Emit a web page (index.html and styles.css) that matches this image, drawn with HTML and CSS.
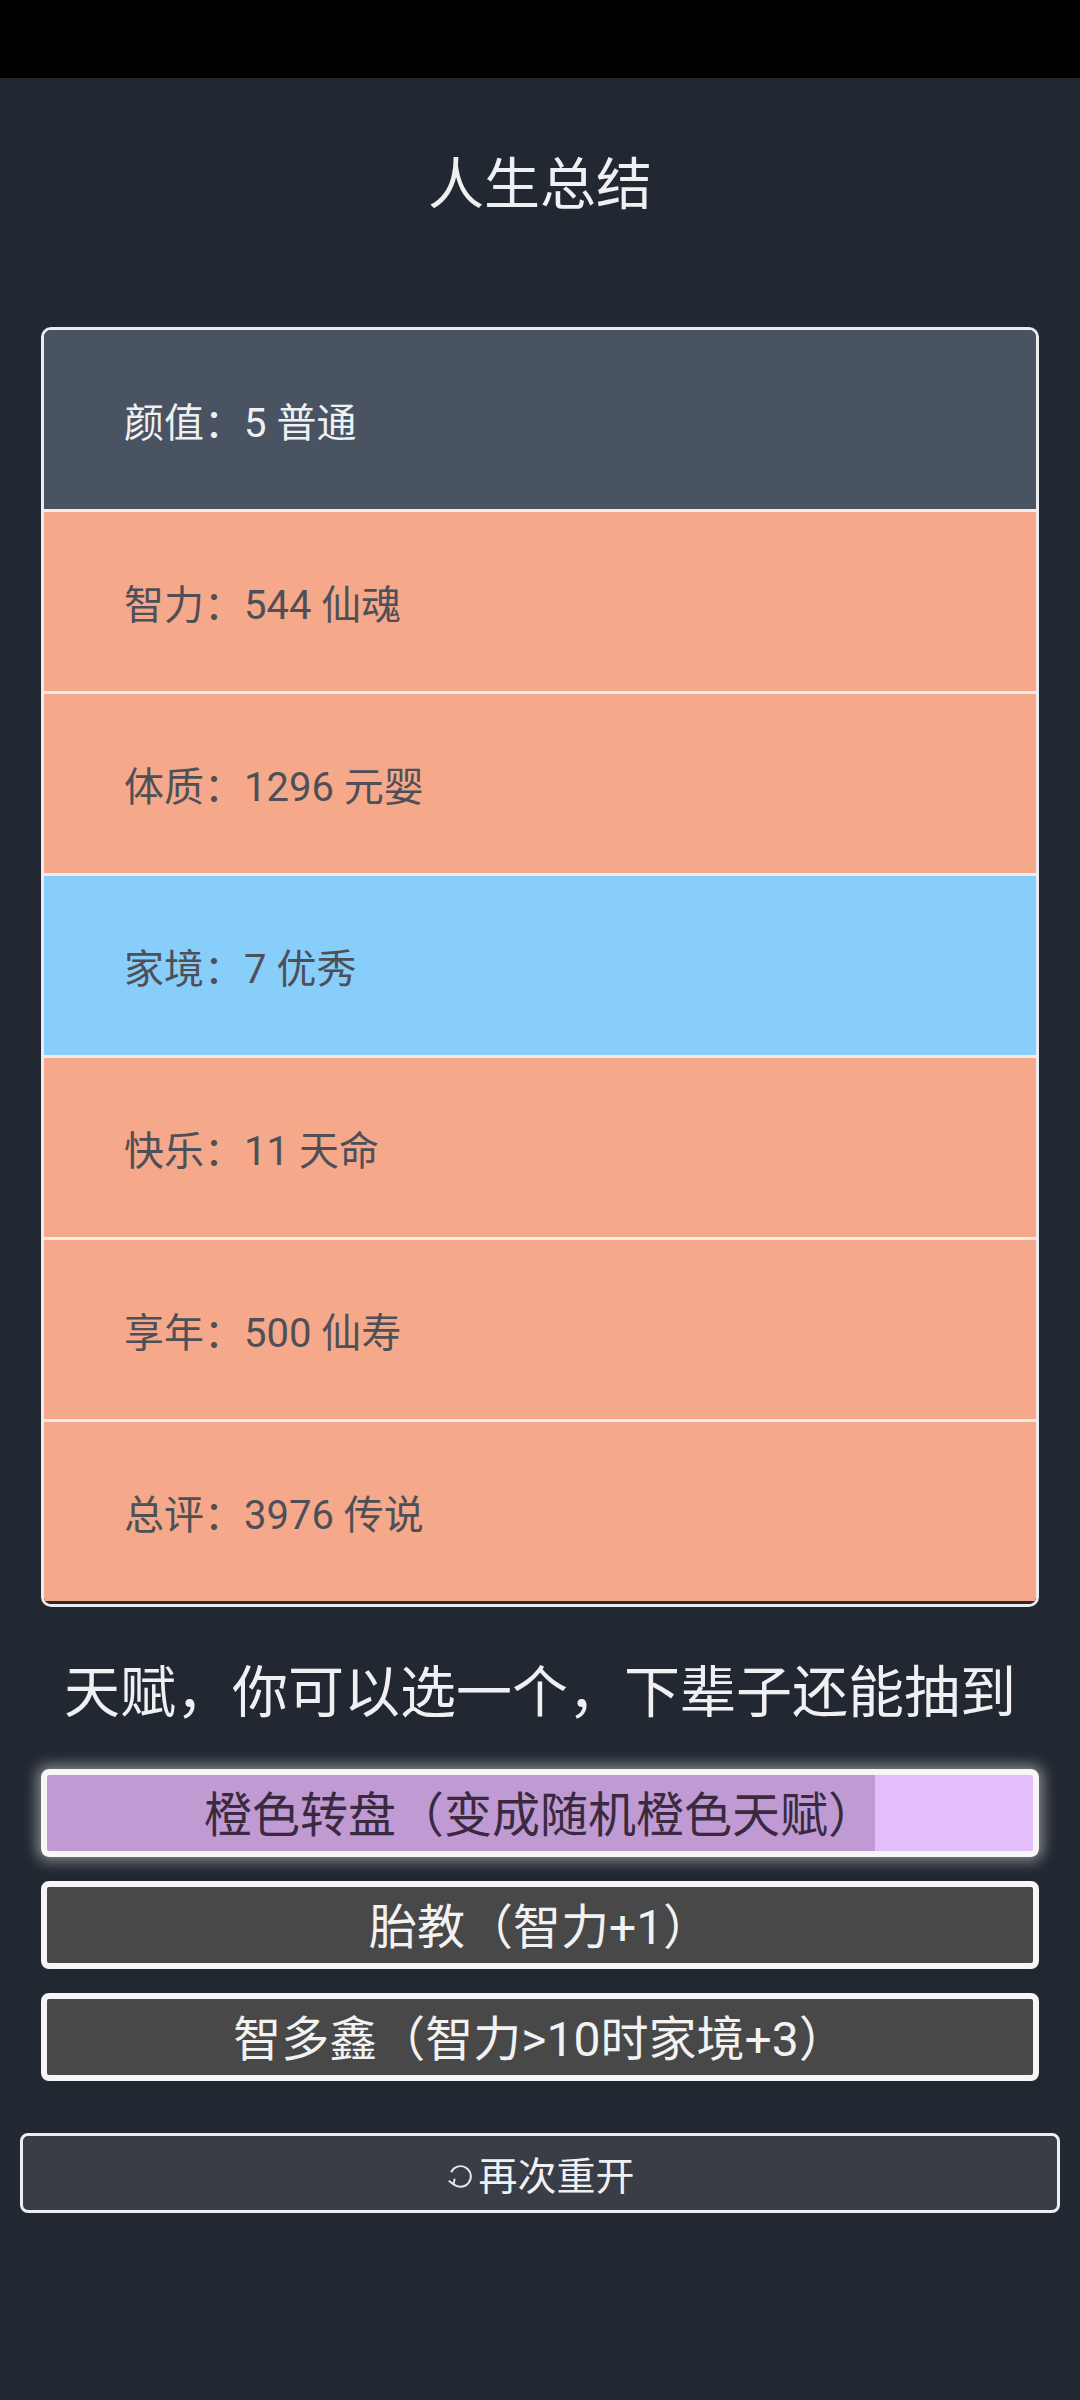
FILE: index.html
```html
<!DOCTYPE html>
<html lang="zh">
<head>
  <meta charset="UTF-8">
  <title>人生总结</title>
  <meta name="viewport" content="width=device-width, initial-scale=1.0">
  <link rel="stylesheet" href="styles.css">
</head>
<body>

  <!-- STATUS BAR -->
  <div class="status-bar"></div>

  <!-- RINGKASAN -->
  <main class="summary">
    <h1 class="title">人生总结</h1>

    <ul class="stats">
      <li class="stat grade-normal">颜值：5 普通</li>
      <li class="stat grade-legend">智力：544 仙魂</li>
      <li class="stat grade-legend">体质：1296 元婴</li>
      <li class="stat grade-good">家境：7 优秀</li>
      <li class="stat grade-legend">快乐：11 天命</li>
      <li class="stat grade-legend">享年：500 仙寿</li>
      <li class="stat grade-legend">总评：3976 传说</li>
    </ul>

    <h2 class="subtitle">天赋，你可以选一个，下辈子还能抽到</h2>

    <div class="talents">
      <button class="talent selected" style="--progress: 84%">橙色转盘（变成随机橙色天赋）</button>
      <button class="talent">胎教（智力+1）</button>
      <button class="talent">智多鑫（智力&gt;10时家境+3）</button>
    </div>
  </main>

  <div class="footer">
    <button class="btn-restart">
      <svg class="icon-restart" viewBox="0 0 32 32" width="31" height="30">
        <path d="M8.5 24.5 A11 11 0 1 0 6 12" fill="none" stroke="#e8e8ec" stroke-width="2"/>
        <path d="M3.5 21 L8.5 24.8 L9.8 19" fill="none" stroke="#e8e8ec" stroke-width="2"/>
      </svg>再次重开
    </button>
  </div>

</body>
</html>
```

FILE: styles.css
```css
body {
  margin: 0;
  font-family: Roboto, "Noto Sans CJK SC", sans-serif;
  background-color: #222831;
  color: #f0f0f2;
}

/* STATUS BAR */
.status-bar {
  height: 78px;
  background-color: #000;
}

.summary {
  padding: 0 41px;
}

.title {
  margin: 74px 0 109px;
  font-size: 56px;
  font-weight: normal;
  line-height: 66px;
  text-align: center;
}

/* DAFTAR NILAI */
.stats {
  list-style: none;
  margin: 0;
  padding: 0;
  border: 3px solid #ecebf0;
  border-radius: 10px;
  overflow: hidden;
}

.stat {
  display: flex;
  align-items: center;
  height: 179px;
  padding-left: 80px;
  font-size: 40px;
  border-bottom: 3px solid #f2ebe7;
}

.stat:last-child {
  border-bottom-color: #2a2a2e;
}

.grade-normal {
  background-color: #4a5361;
  color: #eef0f3;
}

.grade-good {
  background-color: #88cefa;
  color: #4f4f57;
}

.grade-legend {
  background-color: #f6a98a;
  color: #4f4f57;
}

.subtitle {
  margin: 53px 0 43px;
  font-size: 56px;
  font-weight: normal;
  line-height: 66px;
  text-align: center;
  white-space: nowrap;
}

/* TALENT */
.talents {
  display: flex;
  flex-direction: column;
  gap: 24px;
}

.talent {
  height: 88px;
  padding: 0 0 5px;
  border: 6px solid #f6f6f6;
  border-radius: 8px;
  background-color: #484848;
  color: #f2f2f2;
  font-family: Roboto, "Noto Sans CJK SC", sans-serif;
  font-size: 48px;
  cursor: pointer;
}

.talent.selected {
  background: linear-gradient(to right, #c09bd3 var(--progress), #e3befc var(--progress));
  color: #3a2a40;
  box-shadow: 0 0 14px 4px rgba(255,255,255,0.45);
}

.footer {
  padding: 52px 20px 0;
}

.btn-restart {
  display: flex;
  align-items: center;
  justify-content: center;
  width: 100%;
  height: 80px;
  border: 3px solid #eceef2;
  border-radius: 8px;
  background-color: #393d46;
  color: #f0f0f2;
  font-family: Roboto, "Noto Sans CJK SC", sans-serif;
  font-size: 39px;
  cursor: pointer;
}

.icon-restart {
  margin-right: 2px;
  margin-top: 6px;
}
```
